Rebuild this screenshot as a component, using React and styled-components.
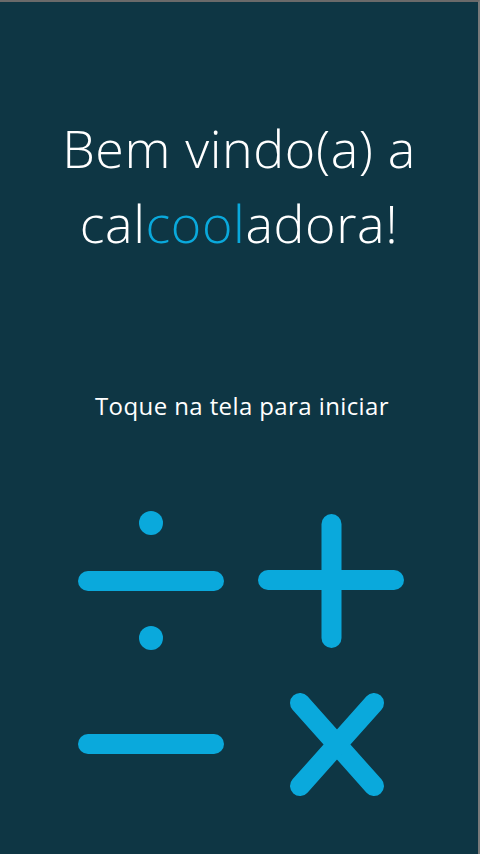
import React from "react";
import styled, { createGlobalStyle } from "styled-components";

const GlobalStyle = createGlobalStyle`
  html, body {
    margin: 0;
    padding: 0;
    background: #0e3644;
  }
`;

const Screen = styled.div`
  box-sizing: border-box;
  width: 480px;
  height: 854px;
  background: #0e3644;
  border-top: 2px solid #6a6a6a;
  border-right: 2px solid #7a7a7a;
  display: flex;
  flex-direction: column;
  align-items: center;
  font-family: "Open Sans", "Liberation Sans", sans-serif;
  color: #ffffff;
  cursor: pointer;
  overflow: hidden;
`;

const Title = styled.h1`
  margin: 108px 0 0;
  font-weight: 300;
  font-size: 52px;
  line-height: 75px;
  text-align: center;
  letter-spacing: 0.6px;
  white-space: nowrap;
`;

const Cool = styled.span`
  color: #0aa9dc;
`;

const Hint = styled.p`
  margin: 131px 0 0;
  padding-left: 6px;
  font-size: 24px;
  font-weight: 400;
  line-height: 30px;
  letter-spacing: 0.4px;
`;

const Symbols = styled.div`
  display: grid;
  grid-template-columns: 146px 146px;
  column-gap: 34px;
  row-gap: 23px;
  margin-top: 90px;
  padding-left: 4px;
`;

const Symbol = styled.svg`
  display: block;
  width: 146px;
  height: 140px;
  stroke: #0aa9dc;
  fill: #0aa9dc;
  stroke-width: 20;
  stroke-linecap: round;
`;

function Divide() {
  return (
    <Symbol viewBox="0 0 146 140">
      <circle cx="73" cy="12" r="12" stroke="none" />
      <line x1="10" y1="70" x2="136" y2="70" />
      <circle cx="73" cy="127" r="12" stroke="none" />
    </Symbol>
  );
}

function Plus() {
  return (
    <Symbol viewBox="0 0 146 140">
      <line x1="10" y1="69" x2="136" y2="69" />
      <line x1="73.5" y1="13" x2="73.5" y2="127" />
    </Symbol>
  );
}

function Minus() {
  return (
    <Symbol viewBox="0 0 146 140">
      <line x1="10" y1="70" x2="136" y2="70" />
    </Symbol>
  );
}

function Times() {
  return (
    <Symbol viewBox="0 0 146 140">
      <line x1="42" y1="29" x2="116" y2="112" />
      <line x1="116" y1="29" x2="42" y2="112" />
    </Symbol>
  );
}

export default function App() {
  return (
    <>
      <GlobalStyle />
      <Screen>
        <Title>
          Bem vindo(a) a
          <br />
          cal<Cool>cool</Cool>adora!
        </Title>
        <Hint>Toque na tela para iniciar</Hint>
        <Symbols>
          <Divide />
          <Plus />
          <Minus />
          <Times />
        </Symbols>
      </Screen>
    </>
  );
}
